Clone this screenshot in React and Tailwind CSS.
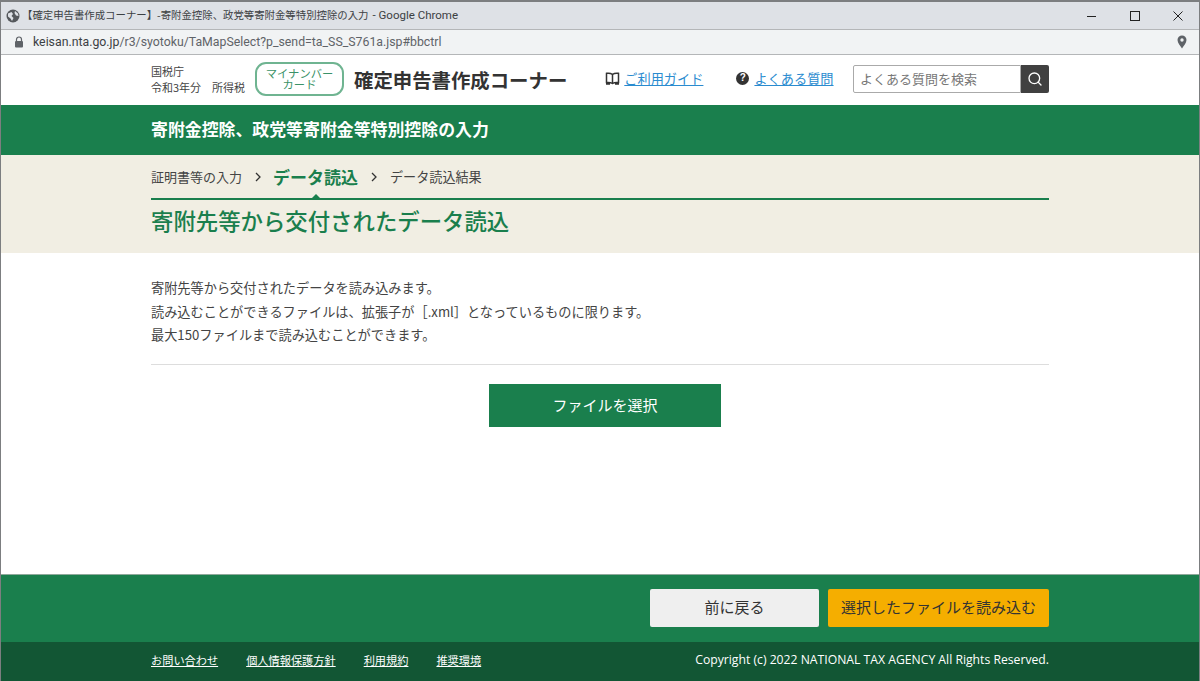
import React from "react";
import { Search } from "lucide-react";

const jp = "font-['Noto_Sans_CJK_JP','Liberation_Sans',sans-serif]";

function WindowBar() {
  return (
    <div className="h-[29px] shrink-0 bg-[#dee1e6] border-t-2 border-[#7c7e80] flex items-center pl-[5px] text-[#3c4043]">
      <svg width="14" height="14" viewBox="0 0 14 14" className="shrink-0">
        <circle cx="7" cy="7" r="6.5" fill="#55585c" />
        <path d="M2 4.5 L5.5 3 L7 5 L5.5 7 L7.5 9 L6 12 L4.5 9.5 L2 7.5 Z M9 2 L12 4.5 L12.5 7 L10 6.5 L8.5 4 Z" fill="#dee1e6" />
      </svg>
      <span className="ml-[2px] text-[10.4px] leading-none whitespace-nowrap">【確定申告書作成コーナー】-寄附金控除、政党等寄附金等特別控除の入力</span>
      <span className="ml-[4px] text-[11.5px] leading-none whitespace-nowrap font-['Roboto',sans-serif]">- Google Chrome</span>
      <div className="ml-auto flex items-center text-[#333]">
        <div className="w-[43px] flex justify-center">
          <svg width="10" height="10" viewBox="0 0 10 10"><path d="M0 5.5 H9" stroke="#222" strokeWidth="1" /></svg>
        </div>
        <div className="w-[43px] flex justify-center">
          <svg width="10" height="10" viewBox="0 0 10 10"><rect x="0.5" y="0.5" width="9" height="9" fill="none" stroke="#222" strokeWidth="1" /></svg>
        </div>
        <div className="w-[43px] flex justify-center">
          <svg width="10" height="10" viewBox="0 0 10 10"><path d="M0.5 0.5 L9.5 9.5 M9.5 0.5 L0.5 9.5" stroke="#222" strokeWidth="1" /></svg>
        </div>
      </div>
    </div>
  );
}

function AddressBar() {
  return (
    <div className="h-[26px] shrink-0 bg-[#f1f3f4] border-t border-b border-[#b4b6b8] flex items-center pl-[13px] pr-[12px]">
      <svg width="10" height="12" viewBox="0 0 10 12" className="shrink-0">
        <path d="M2.5 5 V3.5 a2.5 2.5 0 0 1 5 0 V5" fill="none" stroke="#5f6368" strokeWidth="1.2" />
        <rect x="1" y="5" width="8" height="6.5" rx="1" fill="#5f6368" />
      </svg>
      <span className="ml-[9px] text-[12.3px] leading-none text-[#5f6368] font-['Roboto',sans-serif] whitespace-nowrap">
        <span className="text-[#3c4043]">keisan.nta.go.jp</span>/r3/syotoku/TaMapSelect?p_send=ta_SS_S761a.jsp#bbctrl
      </span>
      <svg width="10" height="14" viewBox="0 0 10 14" className="ml-auto">
        <path fillRule="evenodd" d="M5 0.5 a4.5 4.5 0 0 1 4.5 4.5 c0 3 -3 6 -4.5 8.5 C3.5 11 0.5 8 0.5 5 A4.5 4.5 0 0 1 5 0.5 Z M5 3.3 a1.7 1.7 0 1 0 0 3.4 a1.7 1.7 0 1 0 0 -3.4 Z" fill="#5f6368" />
      </svg>
    </div>
  );
}

function Header() {
  return (
    <div className="h-[50px] shrink-0 bg-white">
      <div className="w-[898px] mx-auto h-full flex items-center">
        <div className="w-[104px] -mt-[3px] text-[11px] leading-[16px] text-[#444] whitespace-nowrap">
          <p>国税庁</p>
          <p>令和3年分　所得税</p>
        </div>
        <div className="w-[89px] h-[34px] -mt-[2px] shrink-0 rounded-[11px] border-2 border-[#6fb491] flex items-center justify-center text-center text-[11.3px] leading-[11px] text-[#3b9268]">
          <span>マイナンバー<br />カード</span>
        </div>
        <span className="ml-[10px] text-[19.4px] font-bold text-[#333] whitespace-nowrap -mt-[1px]">確定申告書作成コーナー</span>
        <div className="ml-[38px] flex items-center gap-[4px] -mt-[3px]">
          <svg width="15" height="13" viewBox="0 0 15 13">
            <path d="M7.5 2.5 C6 1.2 4 1 1.5 1.3 V10.5 C4 10.2 6 10.5 7.5 11.5 C9 10.5 11 10.2 13.5 10.5 V1.3 C11 1 9 1.2 7.5 2.5 Z M7.5 2.5 V11.5 M1 12 H5 M10 12 H14" fill="none" stroke="#333" strokeWidth="1.5" />
          </svg>
          <a className="text-[13.2px] text-[#2a8bcf] underline whitespace-nowrap">ご利用ガイド</a>
        </div>
        <div className="ml-[33px] flex items-center gap-[5px] -mt-[3px]">
          <div className="w-[13px] h-[13px] rounded-full bg-[#333] text-white text-[10px] font-bold leading-none flex items-center justify-center font-['Liberation_Sans',sans-serif]">?</div>
          <a className="text-[13.2px] text-[#2a8bcf] underline whitespace-nowrap">よくある質問</a>
        </div>
        <div className="ml-auto flex h-[28px] -mt-[2px]">
          <div className="w-[168px] border border-[#aaa] rounded-l-[2px] flex items-center pl-[6px] text-[13px] text-[#777] whitespace-nowrap">よくある質問を検索</div>
          <div className="w-[28px] bg-[#404040] rounded-r-[2px] flex items-center justify-center">
            <Search size={16} color="#fff" strokeWidth={2} />
          </div>
        </div>
      </div>
    </div>
  );
}

function SectionBar() {
  return (
    <div className="h-[50px] shrink-0 bg-[#1a7f4d]">
      <div className="w-[898px] mx-auto h-full flex items-center pb-[3px] text-[16.9px] font-bold text-white whitespace-nowrap">
        寄附金控除、政党等寄附金等特別控除の入力
      </div>
    </div>
  );
}

function PageTitle() {
  return (
    <div className="h-[98px] shrink-0 bg-[#f1eee3]">
      <div className="w-[898px] mx-auto">
        <div className="h-[45px] flex items-center pt-[1px] border-b-2 border-[#1a7f4d] relative text-[#444] text-[13px] whitespace-nowrap">
          <span>証明書等の入力</span>
          <svg width="6" height="10" viewBox="0 0 6 10" className="ml-[13px]"><path d="M1 1 L5 5 L1 9" fill="none" stroke="#333" strokeWidth="1.3" /></svg>
          <span className="ml-[12px] text-[17px] font-bold text-[#1a7f4d]">データ読込</span>
          <svg width="6" height="10" viewBox="0 0 6 10" className="ml-[13px]"><path d="M1 1 L5 5 L1 9" fill="none" stroke="#333" strokeWidth="1.3" /></svg>
          <span className="ml-[13px] text-[13.1px]">データ読込結果</span>
          <div className="absolute left-[161px] bottom-0 w-0 h-0 border-l-[4px] border-r-[4px] border-b-[4px] border-l-transparent border-r-transparent border-b-[#1a7f4d]" />
        </div>
        <h1 className="mt-[4px] text-[22.4px] leading-[32px] font-medium text-[#1a7f4d] whitespace-nowrap">寄附先等から交付されたデータ読込</h1>
      </div>
    </div>
  );
}

function Body() {
  return (
    <div className="flex-1 bg-white">
      <div className="w-[898px] mx-auto pt-[23px]">
        <div className="text-[13.2px] leading-[23.5px] text-[#444] pb-[17px] border-b border-[#ddd]">
          <p>寄附先等から交付されたデータを読み込みます。</p>
          <p>読み込むことができるファイルは、拡張子が［.xml］となっているものに限ります。</p>
          <p>最大150ファイルまで読み込むことができます。</p>
        </div>
        <button className="block ml-[338px] mt-[19px] w-[232px] h-[43px] bg-[#1a7f4d] text-white text-[15px]">ファイルを選択</button>
      </div>
    </div>
  );
}

function Footer() {
  return (
    <div className="shrink-0">
      <div className="h-[68px] bg-[#1a7f4d] border-t border-[#8fa99b]">
        <div className="w-[898px] mx-auto h-full flex items-center justify-end gap-[9px] pb-[2px]">
          <button className="w-[169px] h-[38px] rounded-[2px] bg-[#efefef] text-[15px] text-[#333]">前に戻る</button>
          <button className="w-[221px] h-[38px] rounded-[2px] bg-[#f5ae00] text-[15px] text-[#333]">選択したファイルを読み込む</button>
        </div>
      </div>
      <div className="h-[39px] bg-[#125634]">
        <div className="w-[898px] mx-auto h-full flex items-center text-[11.2px] text-white whitespace-nowrap pb-[2px]">
          <a className="underline">お問い合わせ</a>
          <a className="underline ml-[28px]">個人情報保護方針</a>
          <a className="underline ml-[28px]">利用規約</a>
          <a className="underline ml-[28px]">推奨環境</a>
          <span className="ml-auto text-[12.2px] font-['Open_Sans',sans-serif]">Copyright (c) 2022 NATIONAL TAX AGENCY All Rights Reserved.</span>
        </div>
      </div>
    </div>
  );
}

export default function App() {
  return (
    <div className={`h-[681px] w-[1200px] overflow-hidden flex flex-col border-x border-[#7c7e80] bg-white ${jp}`}>
      <WindowBar />
      <AddressBar />
      <Header />
      <SectionBar />
      <PageTitle />
      <Body />
      <Footer />
    </div>
  );
}
